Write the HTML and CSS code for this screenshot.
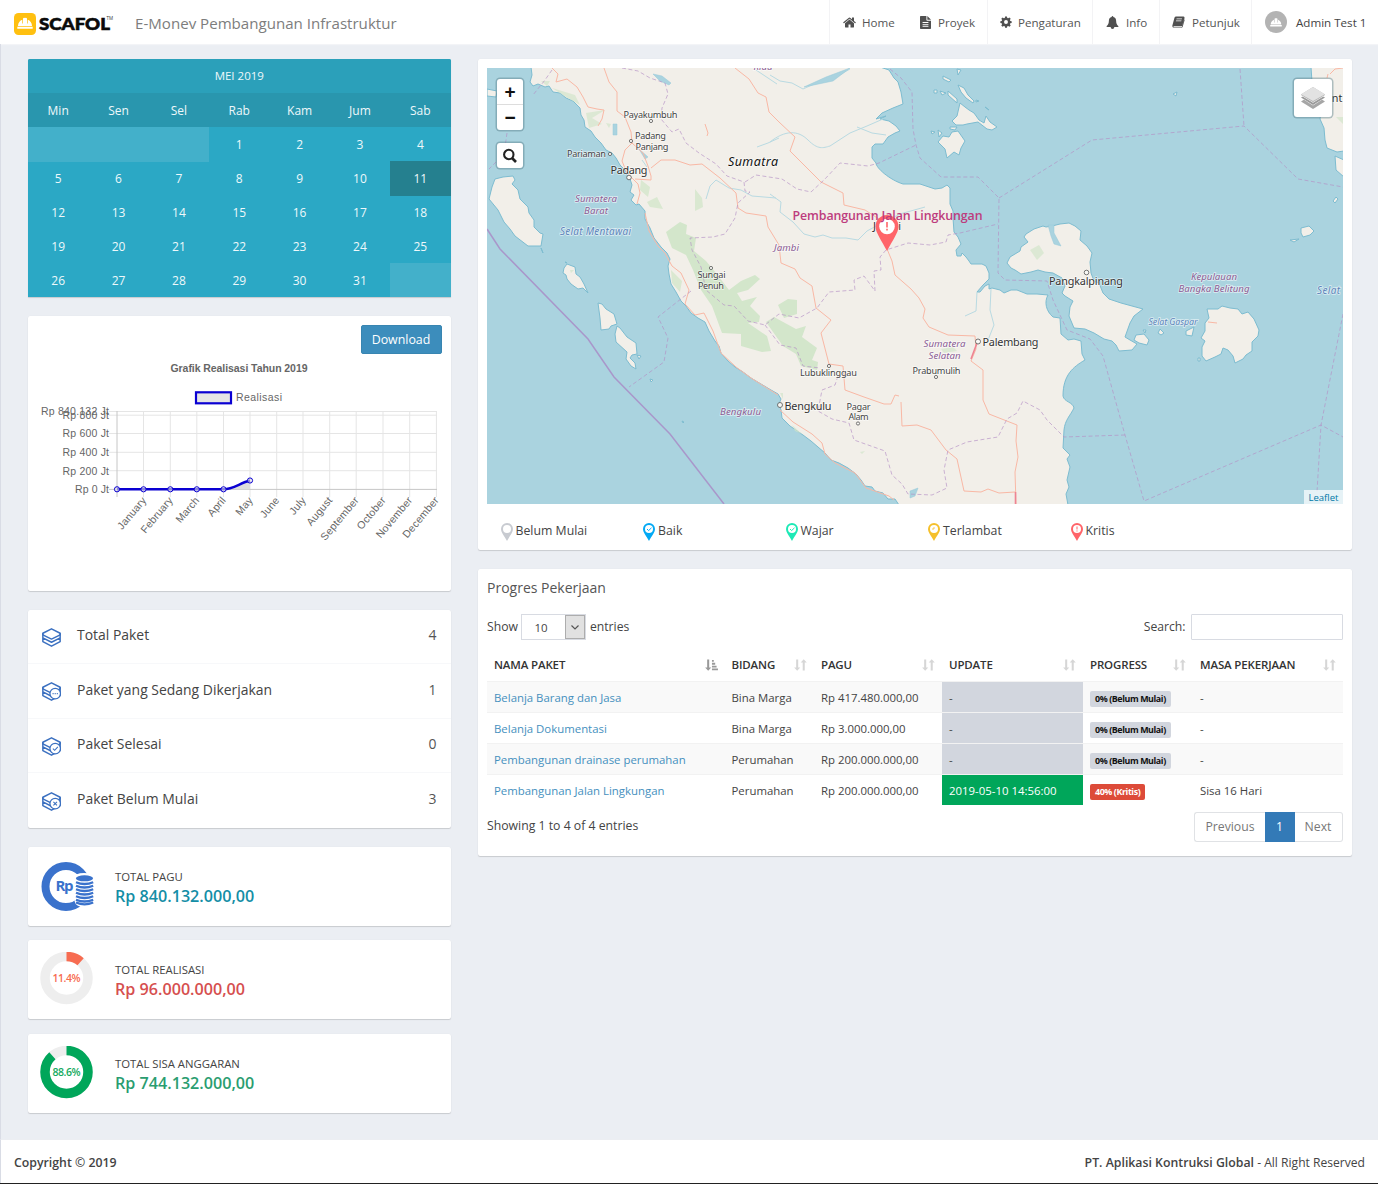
FILE: index.html
```html
<!DOCTYPE html>
<html lang="id">
<head>
<meta charset="utf-8">
<title>E-Monev Pembangunan Infrastruktur</title>
<link rel="stylesheet" href="styles.css">
</head>
<body>
<svg class="defs" aria-hidden="true">
  <defs>
    <symbol id="helmet" viewBox="0 0 16 12"><path d="M1 8.600C1 5.200 3 3 5.300 2.200V6h.7V1.600Q6 .2 7 .2h2q1 0 1 1.400V6h.7V2.200C13 3 15 5.200 15 8.600zM.3 9.300h15.400V11.300H.3z" fill="#fff"/></symbol>
    <symbol id="home" viewBox="0 200 1664 1400"><path d="M1408 992v480q0 26-19 45t-45 19H960v-384H704v384H320q-26 0-45-19t-19-45V992q0-1 .5-3t.5-3l575-474 575 474q1 2 1 6zm223-69l-62 74q-8 9-21 11h-3q-13 0-21-7L832 424l-692 577q-12 8-24 7-13-2-21-11l-62-74q-8-10-7-23.500T37 878l719-599q32-26 76-26t76 26l244 204V288q0-14 9-23t23-9h192q14 0 23 9t9 23v408l219 182q10 8 11 21.500t-7 23.500z"/></symbol>
    <symbol id="file" viewBox="0 0 12 14"><path fill-rule="evenodd" d="M.8 0H7v4.200q0 .8.8.8H12v8.200q0 .8-.8.8H.8q-.8 0-.8-.8V.8Q0 0 .8 0zM8 0l4 4H8zM2.800 6.500v1h6.400v-1zm0 2v1h6.400v-1zm0 2v1h6.400v-1z"/></symbol>
    <symbol id="gear" viewBox="0 0 14 14"><path fill-rule="evenodd" d="M5.900.5h2.200l.4 1.700 1 .4 1.500-.9 1.500 1.500-.9 1.500.4 1 1.600.3v2.200l-1.600.3-.4 1 .9 1.500-1.500 1.500-1.500-.9-1 .4-.4 1.600H5.900l-.3-1.600-1.100-.4-1.500.9-1.500-1.500.9-1.500-.4-1L.4 8.200V6L2 5.700l.4-1-.9-1.500L3 1.700l1.500.9 1.100-.4zM7 4.800a2.300 2.300 0 1 0 0 4.600 2.300 2.300 0 0 0 0-4.600z"/></symbol>
    <symbol id="bell" viewBox="0 0 14 14"><path d="M7 0q.9 0 .9 1c2 .4 3 2 3 4 0 3 .8 4.600 2.600 6q0 .8-.8.8H9Q8.900 14 7 14t-2-2.200H1.300q-.8 0-.8-.8C2.300 9.600 3.100 8 3.100 5c0-2 1-3.600 3-4Q6.100 0 7 0z"/></symbol>
    <symbol id="book" viewBox="0 0 15 14"><path fill-rule="evenodd" d="M4.700.6h8.700q1.500.4 1.100 2l-2.300 8.300q-.4 1.200-1.600 1.200H2.300q-.9 0-.7.6.2.300.9.300h8.100q.8 0 1-.7l2.500-8.500q.8.300.5 1.300l-2.200 7.400q-.4 1.300-1.700 1.300H2.400Q.6 13.800.3 12q-.1-.9.2-1.600L2.800 2Q3.200.6 4.700.6zM5.300 3l-.3.900h6.300l.3-.9zm-.6 2.200-.3.900h6.300l.3-.9z"/></symbol>
    <symbol id="sort" viewBox="0 0 14 13"><path d="M2.300.5h2.200v8.700h2.200L3.400 12.700.1 9.200h2.200zM10.500.3l3.300 3.500h-2.200v8.700H9.400V3.800H7.200z"/></symbol>
    <symbol id="sort-asc" viewBox="0 0 14 13"><path d="M2.300.5h2.200v8.700h2.200L3.400 12.700.1 9.200h2.200zM7.500 1h2v2h-2zm0 3.100H11v2H7.500zm0 3.100h5v2h-5zm0 3.100H14v2H7.500z"/></symbol>
    <symbol id="layers" viewBox="0 0 18 18"><g fill="none" stroke="#3b70c0" stroke-width="1.400" stroke-linejoin="round"><path d="M9 .8 17.200 5v1.500L9 10.500.8 6.500V5z"/><path d="M.8 5v4.300L9 13.500l8.200-4.200V5M.8 9.300v3.600L9 17.200l8.200-4.300V9.300"/></g></symbol>
    <symbol id="pin" viewBox="0 0 12 18"><path fill-rule="evenodd" d="M6 0a6 6 0 0 1 6 6c0 3.500-3.500 7-6 12C3.500 13 0 9.500 0 6a6 6 0 0 1 6-6z"/><circle cx="6" cy="6" r="4" fill="#fff"/></symbol>
  </defs>
</svg>

<header class="topbar">
  <svg class="logo" viewBox="0 0 100 22" width="100" height="22">
    <rect width="22" height="22" rx="4.500" fill="#ffc010"/>
    <use href="#helmet" x="3" y="4.500" width="16" height="12"/>
    <text x="25" y="17.300" class="logo-text" textLength="71" lengthAdjust="spacingAndGlyphs">SCAFOL</text>
    <text x="92.500" y="7" class="logo-tm">TM</text>
  </svg>
  <h1 class="app-title">E-Monev Pembangunan Infrastruktur</h1>
  <nav class="nav">
    <a class="nav-home"><svg width="13" height="11"><use href="#home"/></svg>Home</a>
    <a class="nav-proyek"><svg width="11" height="13"><use href="#file"/></svg>Proyek</a>
    <a class="nav-set"><svg width="12" height="12"><use href="#gear"/></svg>Pengaturan</a>
    <a class="nav-info"><svg width="13" height="13"><use href="#bell"/></svg>Info</a>
    <a class="nav-book"><svg width="13" height="12"><use href="#book"/></svg>Petunjuk</a>
    <a class="nav-user"><span class="avatar"><svg width="12" height="9"><use href="#helmet"/></svg></span>Admin Test 1</a>
  </nav>
</header>

<main class="content">
  <section class="left">
    <div class="calendar">
      <div class="cal-title">MEI 2019</div>
      <div class="cal-row cal-days"><span>Min</span><span>Sen</span><span>Sel</span><span>Rab</span><span>Kam</span><span>Jum</span><span>Sab</span></div>
      <div class="cal-row"><span class="blank"></span><span class="blank"></span><span class="blank"></span><span>1</span><span>2</span><span>3</span><span>4</span></div>
      <div class="cal-row"><span>5</span><span>6</span><span>7</span><span>8</span><span>9</span><span>10</span><span class="today">11</span></div>
      <div class="cal-row"><span>12</span><span>13</span><span>14</span><span>15</span><span>16</span><span>17</span><span>18</span></div>
      <div class="cal-row"><span>19</span><span>20</span><span>21</span><span>22</span><span>23</span><span>24</span><span>25</span></div>
      <div class="cal-row"><span>26</span><span>27</span><span>28</span><span>29</span><span>30</span><span>31</span><span class="blank"></span></div>
    </div>

    <div class="card chart-card">
      <button class="download">Download</button>
      <svg class="chart" viewBox="28 356 422 234" width="422" height="234">
        <text x="170.500" y="372" class="chart-title" textLength="137">Grafik Realisasi Tahun 2019</text>
        <rect x="196" y="392.300" width="35" height="11" fill="#e5e5e5" stroke="#0a00d2" stroke-width="2.200"/>
        <text x="236" y="401.300" textLength="46">Realisasi</text>
        <g class="grid">
          <path d="M109 411.500H437M109 415.200H437M109 433.500H437M109 452.300H437M109 470.700H437"/>
          <path d="M143.500 411V497M170.300 411V497M196.800 411V497M223.500 411V497M250 411V497M276.700 411V497M303 411V497M329.700 411V497M356.200 411V497M383 411V497M409.700 411V497M436.400 411V497"/>
          <path class="axis" d="M117 411V497M109 489.400H437"/>
        </g>
        <g text-anchor="end">
          <text x="109" y="415.300" textLength="68">Rp 840.132 Jt</text>
          <text x="109" y="419" textLength="46.500">Rp 800 Jt</text>
          <text x="109" y="437.300" textLength="46.500">Rp 600 Jt</text>
          <text x="109" y="455.800" textLength="46.500">Rp 400 Jt</text>
          <text x="109" y="474.500" textLength="46.500">Rp 200 Jt</text>
          <text x="109" y="493" textLength="34">Rp 0 Jt</text>
        </g>
        <g text-anchor="end" class="months">
          <text transform="translate(147 500.500) rotate(-50)">January</text>
          <text transform="translate(173.500 500.500) rotate(-50)">February</text>
          <text transform="translate(200 500.500) rotate(-50)">March</text>
          <text transform="translate(226.500 500.500) rotate(-50)">April</text>
          <text transform="translate(253.500 500.500) rotate(-50)">May</text>
          <text transform="translate(280 500.500) rotate(-50)">June</text>
          <text transform="translate(306.500 500.500) rotate(-50)">July</text>
          <text transform="translate(333 500.500) rotate(-50)">August</text>
          <text transform="translate(359.500 500.500) rotate(-50)">September</text>
          <text transform="translate(386.500 500.500) rotate(-50)">October</text>
          <text transform="translate(413 500.500) rotate(-50)">November</text>
          <text transform="translate(439.500 500.500) rotate(-50)">December</text>
        </g>
        <path d="M223.500 489.300C233 489.300 240 483 250 480.500V489.300z" fill="#ddd"/>
        <path d="M117 489.300H223.500C233 489.300 240 483 250 480.500" fill="none" stroke="#0a00d2" stroke-width="2.400"/>
        <g fill="#e5e5e5" fill-opacity=".6" stroke="#0a00d2" stroke-width="1"><circle cx="117" cy="489.300" r="2.600"/><circle cx="143.500" cy="489.300" r="2.600"/><circle cx="170.300" cy="489.300" r="2.600"/><circle cx="196.800" cy="489.300" r="2.600"/><circle cx="223.500" cy="489.300" r="2.600"/><circle cx="250" cy="480.500" r="2.600"/></g>
      </svg>
    </div>

    <ul class="card stats">
      <li><svg width="19" height="19"><use href="#layers"/></svg><span>Total Paket</span><b>4</b></li>
      <li><svg width="19" height="19" viewBox="0 0 18 18"><use href="#layers"/><circle cx="12.500" cy="11" r="5" fill="#fff" stroke="#3b70c0" stroke-width="1.200"/><path d="M10 11h1m1 0h1m1 0h1" stroke="#3b70c0"/></svg><span>Paket yang Sedang Dikerjakan</span><b>1</b></li>
      <li><svg width="19" height="19" viewBox="0 0 18 18"><use href="#layers"/><circle cx="12.500" cy="11" r="5" fill="#fff" stroke="#3b70c0" stroke-width="1.200"/><path d="M10.300 11l1.700 1.600 3-3.200" stroke="#3b70c0" fill="none"/></svg><span>Paket Selesai</span><b>0</b></li>
      <li><svg width="19" height="19" viewBox="0 0 18 18"><use href="#layers"/><circle cx="12.500" cy="11" r="5" fill="#fff" stroke="#3b70c0" stroke-width="1.200"/><path d="M10.800 9.300l3.400 3.400m0-3.400l-3.400 3.400" stroke="#3b70c0"/></svg><span>Paket Belum Mulai</span><b>3</b></li>
    </ul>

    <div class="card money">
      <svg width="56" height="56" viewBox="0 0 56 56">
        <circle cx="26" cy="27.500" r="20.500" fill="none" stroke="#3a72cc" stroke-width="8"/>
        <text x="15.500" y="32" class="rp" textLength="18">Rp</text>
        <path d="M34.500 19q0-5 9.500-5t10.500 5v23q-1 6-10 6t-10-6z" fill="#fff"/>
        <ellipse cx="44.500" cy="19.300" rx="8.600" ry="3" fill="#3a72cc"/>
        <path d="M36 23.200q8.500 3.600 17.200 0M36 26.700q8.500 3.600 17.200 0M36 30.200q8.500 3.600 17.200 0M36 33.700q8.500 3.600 17.200 0M36 37.200q8.500 3.600 17.200 0M36 40.700q8.500 3.600 17.200 0M36 43.500q8.500 3.600 17.200 0" fill="none" stroke="#3a72cc" stroke-width="2.300"/>
      </svg>
      <div><small>TOTAL PAGU</small><strong class="c-blue">Rp 840.132.000,00</strong></div>
    </div>
    <div class="card money">
      <svg width="56" height="56" viewBox="0 0 56 56"><circle cx="26.500" cy="26" r="21.500" class="ring"/><circle cx="26.500" cy="26" r="21.500" class="ring red" pathLength="100" stroke-dasharray="11.400 88.600" transform="rotate(-90 26.500 26)"/><text x="26.500" y="29.500" class="pct" fill="#f76c51" textLength="28">11.4%</text></svg>
      <div><small>TOTAL REALISASI</small><strong class="c-red">Rp 96.000.000,00</strong></div>
    </div>
    <div class="card money">
      <svg width="56" height="56" viewBox="0 0 56 56"><circle cx="26.500" cy="26" r="21.500" class="ring"/><circle cx="26.500" cy="26" r="21.500" class="ring green" pathLength="100" stroke-dasharray="88.600 11.400" transform="rotate(-90 26.500 26)"/><text x="26.500" y="29.500" class="pct" fill="#14aa60" textLength="28">88.6%</text></svg>
      <div><small>TOTAL SISA ANGGARAN</small><strong class="c-green">Rp 744.132.000,00</strong></div>
    </div>
  </section>

  <section class="right">
    <div class="card map-card">
      <div class="map">
        <svg class="map-svg" viewBox="487 68 856 436" width="856" height="436">
          <rect x="487" y="68" width="856" height="436" fill="#aad3df"/>
          <g class="land">
            <path d="M531 67L532 75 530 82 533 86 538 84 545 87 549 86 553 92 560 93 566 98 573 101 580 108 581 115 584 120 585 127 591 131 595 137 601 143 606 150 612 153 616 158 620 165 625 170 627 175 630 179 632 185 630 192 634 195 631 200 636 205 639 204 645 211 645 219 650 228 654 238 661 247 667 253 670 259 668 266 669 274 671 284 676 292 681 301 686 306 691 313 698 318 705 322 709 331 715 341 719 346 721 353 728 361 735 367 743 372 751 378 761 384 771 390 778 394 781 399 779 404 781 410 782 418 790 426 803 435 811 441 818 447 825 453 831 460 839 463 848 468 856 474 861 480 865 486 872 487 875 491 883 493 888 499 895 499 899 505H1068L1066 494 1069 487 1067 480 1070 467 1067 459 1070 455 1066 451 1063 448 1064 430C1065 420 1070 416 1074 408C1073 402 1064 402 1063 396C1063 375 1073 367 1085 360L1082 354 1081 341 1074 339 1068 340 1061 334 1060 318 1053 317C1046 311 1044 302 1048 295L1037 294 1027 294 1017 290 1011 290 1004 293 1000 290 992 288 989 289 989 284 985 286 980 292 977 292 983 285 989 279 989 273 986 266 982 264 971 264 969 261 966 257 962 253 961 256 957 256 956 250 961 244 958 237 954 232 953 218 953 211 950 204 950 188 947 185 942 188 935 189 920 184 903 184C890 180 876 168 876 163L872 158 872 147 875 144 883 144 888 137 895 133 900 131 896 126 889 121 880 119 886 116 876 119 882 113 893 108 903 104 901 92 898 82 894 78 889 70 880 67z"/>
            <path d="M495 179L503 177 513 176 515 180 512 184 518 190 520 199 528 207 529 213 534 220 534 227 540 233 543 234 541 246 535 246 528 246 515 236 510 229 504 222 498 210 489 199 492 187z"/>
            <path d="M564 268L567 264 575 267 576 274 580 277 584 284 588 293 583 288 578 289 571 284 567 279 566 275 563 273z"/>
            <path d="M598 303L602 304 606 309 614 314 617 324 611 326 609 329 601 330 600 318z"/><path d="M617 326L620 328 627 337 636 343 637 354 632 355 630 358 635 363 636 369 631 366 626 359 627 352 616 342 615 334z"/>
            <path d="M487 89L497 91 496 97 487 96z"/>
            <path d="M1007 263L1010 257 1020 251 1021 247 1028 242 1024 237 1026 234 1034 229 1043 226 1046 227 1052 226 1060 224 1069 223 1075 226 1081 231 1080 240 1087 246 1092 253 1090 262 1091 273 1094 281 1099 283 1103 293 1109 299 1121 303 1143 309 1134 316 1130 323 1125 337 1130 340 1137 344 1132 350 1119 351 1116 345 1112 341 1104 339 1094 333 1085 329 1074 328 1069 316 1070 307 1073 301 1065 296 1062 293 1065 286 1062 278 1053 273 1045 272 1038 270 1031 272 1021 274 1015 270 1011 268z"/>
            <path d="M1207 309L1218 309 1222 306 1230 308 1238 309 1242 314 1248 312 1254 319 1259 330 1258 336 1252 342 1252 351 1246 355 1243 359 1235 363 1233 356 1228 350 1223 348 1221 354 1215 357 1206 361 1202 356 1202 347 1205 341 1201 338 1205 331 1205 323 1209 318z"/>
            <path d="M960 103L965 107 969 110 974 113 979 120 984 123 986 116 990 122 997 127 992 130 987 129 978 122 967 124 963 125 956 125 952 121 957 116z"/><path d="M938 142L943 136 949 137 952 132 958 131 965 141 961 148 959 155 954 152 947 158 945 149z"/><path d="M958 85L964 88 968 95 974 101 973 103 966 98 961 92z"/>
            <path d="M943 76L951 80 949 82 943 79zM948 91L957 99 957 103 948 95zM934 90h3v3h-3zM940 91l6 2-4 2zM950 127l7 0-2 3-5-1zM931 131l4 1-3 2zM938 130l4 3-3 4zM957 69l4 1-3 5zM985 107l4 3zM976 100l3 1-3 1z"/>
            <path d="M1136 335L1144 334 1149 340 1147 345 1139 343 1134 340z"/><path d="M1186 331L1194 327 1192 336 1186 335zM1160 329l4 4-3 2-3-2zM1143 330l3 0-1 3zM1198 358l2 0 0 3-2 0z"/>
            <path d="M1301 228L1309 226 1314 231 1310 235 1303 237 1301 233zM1290 240L1299 239 1294 242zM1333 201L1336 197 1338 199 1335 203zM1173 94l4-2-1 4z"/>
            <path d="M1311 67L1312 82 1316 94 1321 111 1320 119 1324 128 1325 140 1327 148 1337 152 1344 151V67zM1335 156L1344 160V177L1336 170z"/>
            <path d="M650 379l3 1-2 2zM541 248l2 5zM565 262l2 1zM637 355l4 1-2 3zM682 421l2 1-1 1z"/>
          </g>
          <g class="forest">
            <path d="M666 232L680 222 687 225 686 234 696 238 694 251 706 261 716 273 729 290 741 281 755 275 760 279 748 290 737 293 742 301 757 297 750 306 760 316 759 322 748 323 767 336 771 351 762 352 741 346 741 334 722 333 712 306 701 290 693 270 686 255 672 248z"/>
            <path d="M778 305L788 299 797 300 797 314 784 318zM766 322L774 317 796 329 806 326 802 337 817 348 812 360 818 362 817 370 801 366 796 354 783 346z"/>
            <path d="M641 180L650 187 648 197 640 190zM647 202L657 197 662 207 663 209 650 207zM695 189L702 198 703 207 695 211zM671 270L682 281 680 292 672 283z" opacity=".8"/>
            <path d="M552 88L575 95 580 105 566 97zM586 113L605 110 592 118 602 124 589 128zM541 81l9 0-3 5zM606 123l5 1-2 4zM570 270l4 0-3 3zM792 425l10 9-7-3zM860 452l5-1-3 3zM941 349l12-2 4 4-13 2zM1336 117h8v8zM1030 250l9-5 5 8-7 7zM780 393l3 0v6z" opacity=".7"/>
          </g>
          <g class="river">
            <path d="M770 75L780 81 792 83 803 89 812 85 822 82 833 79 843 73 850 69M770 142C785 130 798 130 808 140S823 148 830 146L850 133 867 126 883 119M857 127L872 133 886 135M770 194L781 202 780 212 793 222 804 234 815 237 823 235 832 238 846 238 858 240 867 231 880 224 900 214 925 207M977 292L976 311 965 316M991 289L990 310 994 325 988 340M706 199L710 186 716 180 729 188 741 190 752 196 776 198M757 147L768 143 779 138M756 70L777 84M642 160L647 167"/>
            <path d="M804 87L826 77 850 68 833 81z" class="lake"/><path d="M653 74L662 76 671 83 669 85 660 81zM613 124h4v11h-4zM639 149L648 157 645 159zM910 491l8-3-3 8-5 2z" class="lake"/><path d="M1048 225l6 0v8l7 13-7-2-3-8z" class="lake"/>
          </g>
          <g class="road">
            <path d="M552 68L558 74 556 82 567 79 577 87 583 97 588 107 597 109 604 110 602 119 598 126M604 68L609 82 617 92 617 111 625 117 631 132 632 143 625 150 622 161 627 173 638 184 640 193 637 204M632 143L643 153 648 166 651 176 651 180 635 179M651 168L661 160 675 160 690 165 702 164 720 178 736 193 738 208 746 213 766 216 768 227 779 245 781 263 795 269 800 278 812 286 816 308 831 320 821 333 829 364 843 366 845 390 864 397 884 404 891 404 895 395 899 396M735 68L749 79 758 93 766 97 769 112 779 122M770 113L779 122 795 137 790 151 821 182 843 193 844 205 865 210 882 221 885 244 892 261 895 275 911 289 919 298 925 309 923 318 929 327 948 335 975 336 976 349 971 361 983 370 983 400 989 414 1017 425 1016 441 1018 457 1015 472 1016 504M645 213L649 231 658 246 665 253 672 266 681 273 689 290 685 304 695 315 704 313 713 331 721 353 736 367 751 378 778 395M780 410L793 422 812 434 822 443 825 454 835 463 855 473 866 488 889 496 894 500M901 402L902 426 917 425 931 430 946 450 957 459 964 491 981 492 988 489 999 493 1015 492"/>
            <path d="M705 124l3 9-1 3M1208 322l9 1M1330 74l5-5 8-1M1328 74l-1 4"/>
            <path d="M977 343l-3 8-3 8M1015.500 492v12" class="trunk"/>
          </g>
          <g class="border">
            <path d="M622 68L638 71 650 78 665 83 668 94 662 108 661 119 672 132 679 129 686 143 699 153 716 164 727 176 744 182 745 191 750 192 738 203 735 218 725 234 713 237 690 238 692 250 701 267 706 290 724 305 734 306 748 321 765 325 779 314 799 318 817 308 829 292 855 290 854 280 864 276 875 291 874 271 881 270 880 257 886 250 908 243 930 245 946 242 948 235 960 233 998 224M745 182L756 175 782 179 797 189 811 192 824 180 840 163 868 166 879 163 916 145M890 69L901 78 912 92 913 129 916 145 920 158 941 177 978 177 999 198 998 273 1005 280 1047 281 1053 300 1067 330 1090 339 1103 356 1125 435 1144 501 1321 425 1343 437M999 198L1092 140 1244 126 1298 179 1343 187M1240 69L1244 126M1343 314L1321 425 1317 492M1125 435L1064 437 1047 420 1040 410 1023 401 1017 413 1007 419 998 437 967 442 948 450 944 470 947 488 932 495 908 494 902 484 892 475 885 451 854 440 849 423 832 419 818 411 822 390 835 385 838 376M765 325L780 345 796 348 803 366 820 368M691 291L658 317 668 338 664 362 629 387M552 70L545 80 533 95M507 133L504 154 489 169"/>
            <path d="M487 229L500 249 588 339 614 377 670 434 724 504" class="sea-line"/>
          </g>
          <g class="dot"><circle cx="651" cy="121" r="1.600"/><circle cx="631" cy="141" r="1.600"/><circle cx="610" cy="154" r="1.600"/><circle cx="629" cy="177.500" r="2.300"/><circle cx="711" cy="268" r="1.600"/><circle cx="829" cy="366" r="1.600"/><circle cx="780" cy="405" r="2.500"/><circle cx="858" cy="423.500" r="1.600"/><circle cx="978" cy="341.500" r="2.500"/><circle cx="936" cy="377" r="1.600"/><circle cx="1086.500" cy="272.500" r="2.300"/></g>
          <g class="label">
            <text x="650.500" y="118" textLength="54">Payakumbuh</text><text x="650.500" y="139" textLength="31">Padang</text><text x="652" y="149.500" textLength="33">Panjang</text><text x="586.500" y="157" textLength="39">Pariaman</text><text x="711.500" y="278" textLength="28">Sungai</text><text x="711" y="288.500" textLength="26">Penuh</text><text x="828.500" y="376" textLength="57">Lubuklinggau</text><text x="858.500" y="410" textLength="24">Pagar</text><text x="858.500" y="420" textLength="20">Alam</text><text x="936.500" y="373.500" textLength="48">Prabumulih</text>
            <g class="city"><text x="629" y="173.500" textLength="37">Padang</text><text x="808" y="409.500" textLength="47">Bengkulu</text><text x="1010.500" y="345.500" textLength="56">Palembang</text><text x="1086" y="284.500" textLength="74">Pangkalpinang</text><text x="887" y="229.500" textLength="28">Jambi</text><text x="1337" y="101.500">nt</text></g>
            <text x="753" y="166" class="island" textLength="50">Sumatra</text>
            <g class="prov"><text x="596" y="201.500" textLength="42">Sumatera</text><text x="596" y="214" textLength="24">Barat</text><text x="786.500" y="251" textLength="25">Jambi</text><text x="740.500" y="415" textLength="41">Bengkulu</text><text x="944.500" y="346.500" textLength="42">Sumatera</text><text x="944.500" y="359" textLength="32">Selatan</text><text x="1214" y="279.500" textLength="46">Kepulauan</text><text x="1214" y="292" textLength="71">Bangka Belitung</text><text x="763" y="70" textLength="19">Riau</text></g>
            <g class="water"><text x="595.500" y="234.500" textLength="71">Selat Mentawai</text><text x="1173" y="325" textLength="49" font-size="9">Selat Gaspar</text><text x="1328.500" y="293.500" textLength="23">Selat</text></g>
          </g>
          <path d="M887 215a11.500 11.500 0 0 1 11.500 11.500c0 6-6 14-11.500 24.500-5.500-10.500-11.500-18.500-11.500-24.500A11.500 11.500 0 0 1 887 215z" fill="#ff6469"/><circle cx="887" cy="226.500" r="7.800" fill="#fff"/><path d="M887 222v5.500m0 1.300v1.800" stroke="#ff6469" stroke-width="1.600"/>
          <text x="887.500" y="220" class="marker-text" textLength="190">Pembangunan Jalan Lingkungan</text>
        </svg>
        <div class="zoom"><span>+</span><span>−</span></div>
        <div class="map-search"><svg width="16" height="16" viewBox="0 0 16 16"><circle cx="6.800" cy="6.500" r="4.700" fill="none" stroke="#222" stroke-width="2.100"/><path d="M10 10l4 4" stroke="#222" stroke-width="2.600"/></svg></div>
        <div class="map-layers"><svg width="24" height="22" viewBox="0 0 24 22"><path d="M0 14.500L12 7l12 7.500L12 22z" fill="#a6a6a6"/><path d="M0 10.800L12 3.300l12 7.500-12 7.800z" fill="#fff"/><path d="M0 10.400L12 3l12 7.400-12 7.600z" fill="#9a9a9a"/><path d="M0 8.500L12 1l12 7.500-12 7.300z" fill="#fff"/><path d="M0 7.500L12 0l12 7.500v.6L12 15.200 0 8.100z" fill="#b5b5b5"/><path d="M0 7.200L12 0l12 7.200-12 6.900z" fill="#e2e2e2"/></svg></div>
        <div class="attribution">Leaflet</div>
      </div>
      <div class="legend">
        <span><svg width="12" height="18" fill="#c8cbd1"><use href="#pin"/></svg>Belum Mulai</span>
        <span><svg width="12" height="18" viewBox="0 0 12 18" fill="#03a9f4"><use href="#pin"/><path d="M4 6l1.600 1.600L8.500 4.800" fill="none" stroke="#03a9f4"/></svg>Baik</span>
        <span><svg width="12" height="18" viewBox="0 0 12 18" fill="#1de9b6"><use href="#pin"/><path d="M4 6l1.600 1.600L8.500 4.800" fill="none" stroke="#1de9b6"/></svg>Wajar</span>
        <span><svg width="12" height="18" viewBox="0 0 12 18" fill="#f5c02c"><use href="#pin"/><path d="M6 4v2H4" fill="none" stroke="#f5c02c" stroke-width=".8"/></svg>Terlambat</span>
        <span><svg width="12" height="18" viewBox="0 0 12 18" fill="#ff6469"><use href="#pin"/><path d="M6 3.500v3m0 1v1" stroke="#ff6469"/></svg>Kritis</span>
      </div>
    </div>

    <div class="card table-card">
      <h2>Progres Pekerjaan</h2>
      <div class="controls">
        <div class="length">Show <span class="select"><span>10</span><i><svg width="8" height="5" viewBox="0 0 8 5"><path d="M.5.5L4 4 7.500.5" fill="none" stroke="#555" stroke-width="1.200"/></svg></i></span> entries</div>
        <label class="search">Search:<input type="text"></label>
      </div>
      <div class="table">
        <div class="tr th"><div>NAMA PAKET<svg class="active"><use href="#sort-asc"/></svg></div><div>BIDANG<svg><use href="#sort"/></svg></div><div>PAGU<svg><use href="#sort"/></svg></div><div>UPDATE<svg><use href="#sort"/></svg></div><div>PROGRESS<svg><use href="#sort"/></svg></div><div>MASA PEKERJAAN<svg><use href="#sort"/></svg></div></div>
        <div class="tr odd"><div><a>Belanja Barang dan Jasa</a></div><div>Bina Marga</div><div>Rp 417.480.000,00</div><div class="none">-</div><div><span class="badge">0% (Belum Mulai)</span></div><div>-</div></div>
        <div class="tr"><div><a>Belanja Dokumentasi</a></div><div>Bina Marga</div><div>Rp 3.000.000,00</div><div class="none">-</div><div><span class="badge">0% (Belum Mulai)</span></div><div>-</div></div>
        <div class="tr odd"><div><a>Pembangunan drainase perumahan</a></div><div>Perumahan</div><div>Rp 200.000.000,00</div><div class="none">-</div><div><span class="badge">0% (Belum Mulai)</span></div><div>-</div></div>
        <div class="tr"><div><a>Pembangunan Jalan Lingkungan</a></div><div>Perumahan</div><div>Rp 200.000.000,00</div><div class="done">2019-05-10 14:56:00</div><div><span class="badge danger">40% (Kritis)</span></div><div>Sisa 16 Hari</div></div>
      </div>
      <div class="table-foot">
        <span>Showing 1 to 4 of 4 entries</span>
        <div class="pager"><span>Previous</span><span class="current">1</span><span>Next</span></div>
      </div>
    </div>
  </section>
</main>

<footer class="footer"><b>Copyright © 2019</b><span><b>PT. Aplikasi Kontruksi Global</b> - All Right Reserved</span></footer>
</body>
</html>
```
FILE: styles.css
```css
* { box-sizing: border-box; }
body { margin: 0; height: 1184px; display: flex; flex-direction: column; background: #ebeef3; font: 12.2px "Open Sans", sans-serif; color: #444; border-bottom: 1px solid #222; overflow: hidden; }
.defs { position: absolute; width: 0; height: 0; }

.topbar { height: 44px; flex: none; display: flex; align-items: center; background: #fff; padding-left: 14px; box-shadow: 0 1px 1px #f3f4f7; }
.logo { margin-top: 3px; }
.logo-text { font: 900 17.500px Lato, sans-serif; fill: #0a0a0a; stroke: #0a0a0a; stroke-width: .6; }
.logo-tm { font: 4.500px "Open Sans", sans-serif; fill: #333; }
.app-title { margin: 1px 0 0 21px; font-weight: 400; font-size: 15.100px; color: #7d7d7d; white-space: nowrap; }
.nav { margin-left: auto; height: 44px; display: flex; }
.nav a { display: flex; align-items: center; gap: 7px; white-space: nowrap; font-size: 11.600px; color: #555; border-left: 1px solid #f3f3f5; padding-left: 12px; }
.nav svg { fill: #505050; }
.nav .nav-home { width: 78px; padding-left: 13px; gap: 6px; }
.nav .nav-proyek { width: 80px; border-left: 0; padding-left: 13px; }
.nav .nav-set { width: 105px; gap: 6px; }
.nav .nav-info { width: 67px; padding-left: 13px; }
.nav .nav-book { width: 92px; }
.nav .nav-user { width: 127px; padding-left: 13px; color: #444; gap: 9px; }
.avatar { width: 22px; height: 22px; border-radius: 50%; background: #b3b3b3; display: flex; align-items: center; justify-content: center; }

.content { flex: 1; display: flex; gap: 27.500px; padding: 15px 0 0 27px; border-left: 1px solid #d9dce5; }
.left { width: 422.500px; }
.right { width: 873.500px; }
.card { background: #fff; border-radius: 2px; box-shadow: 0 1px 1px rgba(0,0,0,.14), 0 0 1px rgba(0,0,0,.08); }

.calendar { background: #2ba8c5; color: #eef8fb; font-size: 12px; text-align: center; line-height: 34px; border-radius: 2px 2px 0 0; overflow: hidden; box-shadow: 0 1px 1px rgba(0,0,0,.15); }
.cal-title { background: #2ba0ba; font-size: 11.500px; }
.cal-row { display: grid; grid-template-columns: repeat(7, 1fr); height: 34px; line-height: 35px; }
.cal-days { background: #2996ae; }
.blank { background: #43b0ca; }
.today { background: #25808f; }

.chart-card { margin-top: 19px; height: 275px; padding-top: 9px; display: flex; flex-direction: column; }
.download { align-self: flex-end; margin-right: 9px; width: 81px; height: 29px; flex: none; border: 1px solid #3885b1; border-radius: 2px; background: #3c8dbc; color: #fff; font: 12.400px "Open Sans", sans-serif; padding: 0; }
.chart { margin-top: 2px; flex: none; font: 10.500px "Liberation Sans", sans-serif; fill: #666; }
.chart-title { font-weight: 700; font-size: 10.500px; }
.grid path { stroke: #e5e5e5; fill: none; }
.grid .axis { stroke: #c6c6c6; }
.months { letter-spacing: .2px; }

.stats { list-style: none; margin: 18.500px 0 0; padding: 0; height: 218px; }
.stats li { height: 54.500px; display: flex; align-items: center; padding: 0 14px; border-bottom: 1px solid #f7f8fa; font-size: 13.950px; }
.stats li:last-child { border-bottom: 0; }
.stats li svg { margin-right: 16px; margin-top: 2px; }
.stats span { margin-top: -3px; }
.stats b { margin: -3px 0 0 auto; font-weight: 400; color: #555; }

.money { height: 79px; display: flex; padding: 12px; margin-top: 14.500px; }
.stats + .money { margin-top: 19px; }
.money > div { display: flex; flex-direction: column; padding: 10px 0 0 19px; }
.money small { font-size: 11.350px; line-height: 16px; letter-spacing: -.02px; color: #444; white-space: nowrap; }
.money strong { font-size: 16.150px; line-height: 23px; font-weight: 600; white-space: nowrap; }
.c-blue { color: #148ea6; } .c-red { color: #d64f4f; } .c-green { color: #2a9d70; }
.rp { font: 700 15px "Open Sans", sans-serif; fill: #3a72cc; }
.ring { fill: none; stroke: #eee; stroke-width: 9.500; }
.ring.red { stroke: #f76c51; } .ring.green { stroke: #00a65a; }
.pct { font: 600 10.500px "Open Sans", sans-serif; text-anchor: middle; }

.map-card { height: 491px; padding: 9px; }
.map { position: relative; width: 856px; height: 436px; }
.map-svg { display: block; }
.land path { fill: #f2efe9; stroke: #7dbcd0; stroke-width: 1; stroke-linejoin: round; }
.forest path { fill: #d3e6cb; }
.river path { fill: none; stroke: #b9dae2; stroke-width: 1; }
.river .lake { fill: #aad3df; stroke: #97c8d8; stroke-width: .5; }
.road path { fill: none; stroke: #f9b8a5; stroke-width: 1; stroke-linejoin: round; }
.road .trunk { stroke: #ee8493; stroke-width: 1.600; }
.border path { fill: none; stroke: #b38fc4; stroke-opacity: .65; stroke-width: 1; stroke-dasharray: 4 2.500; }
.border .sea-line { stroke: #a890c8; stroke-opacity: .9; stroke-width: 1.500; stroke-dasharray: none; }
.dot circle { fill: #f8f8f5; stroke: #555; stroke-width: .8; }
.label { font: 9.200px "Noto Sans", sans-serif; fill: #444; text-anchor: middle; stroke: rgba(255,255,255,.6); stroke-width: 1.500px; paint-order: stroke; }
.city { font-size: 10.800px; fill: #333; }
.island { font-size: 12.500px; font-style: italic; fill: #111; }
.prov { font-size: 9.700px; font-style: italic; fill: #8a5c94; }
.water { font-size: 10px; font-style: italic; fill: #5c85bb; }
.marker-text { font: 600 12.400px "Open Sans", sans-serif; fill: #bd3c7d; text-anchor: middle; }
.zoom, .map-search, .map-layers { position: absolute; background: #fff; border-radius: 3px; box-shadow: 0 0 0 1.500px rgba(80,120,130,.42); }
.zoom { left: 10px; top: 11px; width: 26px; height: 51px; font: 700 19px/25px "Liberation Sans", sans-serif; color: #111; text-align: center; }
.zoom span { display: block; height: 25px; }
.zoom span + span { border-top: 1px solid #ddd; }
.map-search { left: 10px; top: 75px; width: 26px; height: 25px; display: flex; align-items: center; justify-content: center; }
.map-layers { left: 807px; top: 11px; width: 38px; height: 38px; display: flex; align-items: center; justify-content: center; }
.attribution { position: absolute; right: 0; bottom: 0; width: 39px; height: 14px; line-height: 15px; background: rgba(255,255,255,.7); font-size: 9.500px; color: #0078a8; text-align: center; }
.legend { display: grid; grid-template-columns: repeat(5, 142.500px); padding: 17px 0 0 13.500px; }
.legend span { display: flex; align-items: center; gap: 3px; font-size: 12.300px; height: 20px; line-height: 18px; }
.legend svg { margin-top: 2px; }

.table-card { margin-top: 19px; height: 287px; padding: 0 9px; }
.table-card h2 { margin: 0; padding-top: 8px; font-size: 14px; line-height: 21px; font-weight: 400; color: #555; }
.controls { display: flex; justify-content: space-between; margin-top: 16px; height: 26px; font-size: 12.200px; }
.length, .search { display: flex; align-items: center; gap: 3px; line-height: 24px; }
.length { gap: 3.500px; }
.search { gap: 5px; }
.select { display: flex; width: 65px; height: 26px; border: 1px solid #d8dbe2; font-size: 11.500px; line-height: 25px; }
.select > span { flex: 1; padding-left: 12px; }
.select i { width: 20px; height: 24px; background: #e1e1e1; border: 1px solid #adadad; display: flex; align-items: center; justify-content: center; }
.search input { width: 152px; height: 26px; border: 1px solid #d8dbe2; border-radius: 1px; padding: 0; }
.table { margin-top: 9px; font-size: 11.400px; }
.tr { display: grid; grid-template-columns: 237.500px 89.500px 128px 141px 110px 150px; height: 31px; border-top: 1px solid #f2f2f2; }
.tr > div { display: flex; align-items: center; padding: 1px 7px 0; white-space: nowrap; color: #444; line-height: 18px; }
.tr.th { height: 32px; border: 0; }
.th > div { justify-content: space-between; font-weight: 600; color: #333; font-size: 11.500px; letter-spacing: -.15px; padding-top: 0; }
.th svg { width: 13px; height: 12px; fill: #d6d6d6; }
.th svg.active { fill: #999; }
.odd { background: #f9f9f9; }
.tr a { color: #4590be; }
.tr .none { background: #d2d6de; }
.tr .done { background: #00a65a; color: #fff; }
.badge { background: #d2d6de; color: #111; border-radius: 2px; font-size: 8.900px; font-weight: 700; line-height: 16px; padding: 0 5px; letter-spacing: -.4px; margin-top: 2px; }
.danger { background: #dd4b39; color: #fff; }
.table-foot { display: flex; justify-content: space-between; margin-top: 7px; font-size: 12.250px; line-height: 28px; }
.pager { display: flex; height: 30px; line-height: 28px; color: #777; }
.pager span { border: 1px solid #e0e2e5; padding: 0 10px; }
.pager span:first-child { border-radius: 3px 0 0 3px; border-right: 0; }
.pager span:last-child { border-radius: 0 3px 3px 0; border-left: 0; }
.pager .current { background: #337ab7; border-color: #337ab7; color: #fff; padding: 0 10.500px; }

.footer { height: 44px; flex: none; display: flex; align-items: center; justify-content: space-between; background: #fff; border-top: 1px solid #eceef2; border-left: 1px solid #d9dce5; padding: 1px 13px 0; font-size: 12.100px; }
.footer b { font-weight: 600; font-size: 12.300px; }
```
